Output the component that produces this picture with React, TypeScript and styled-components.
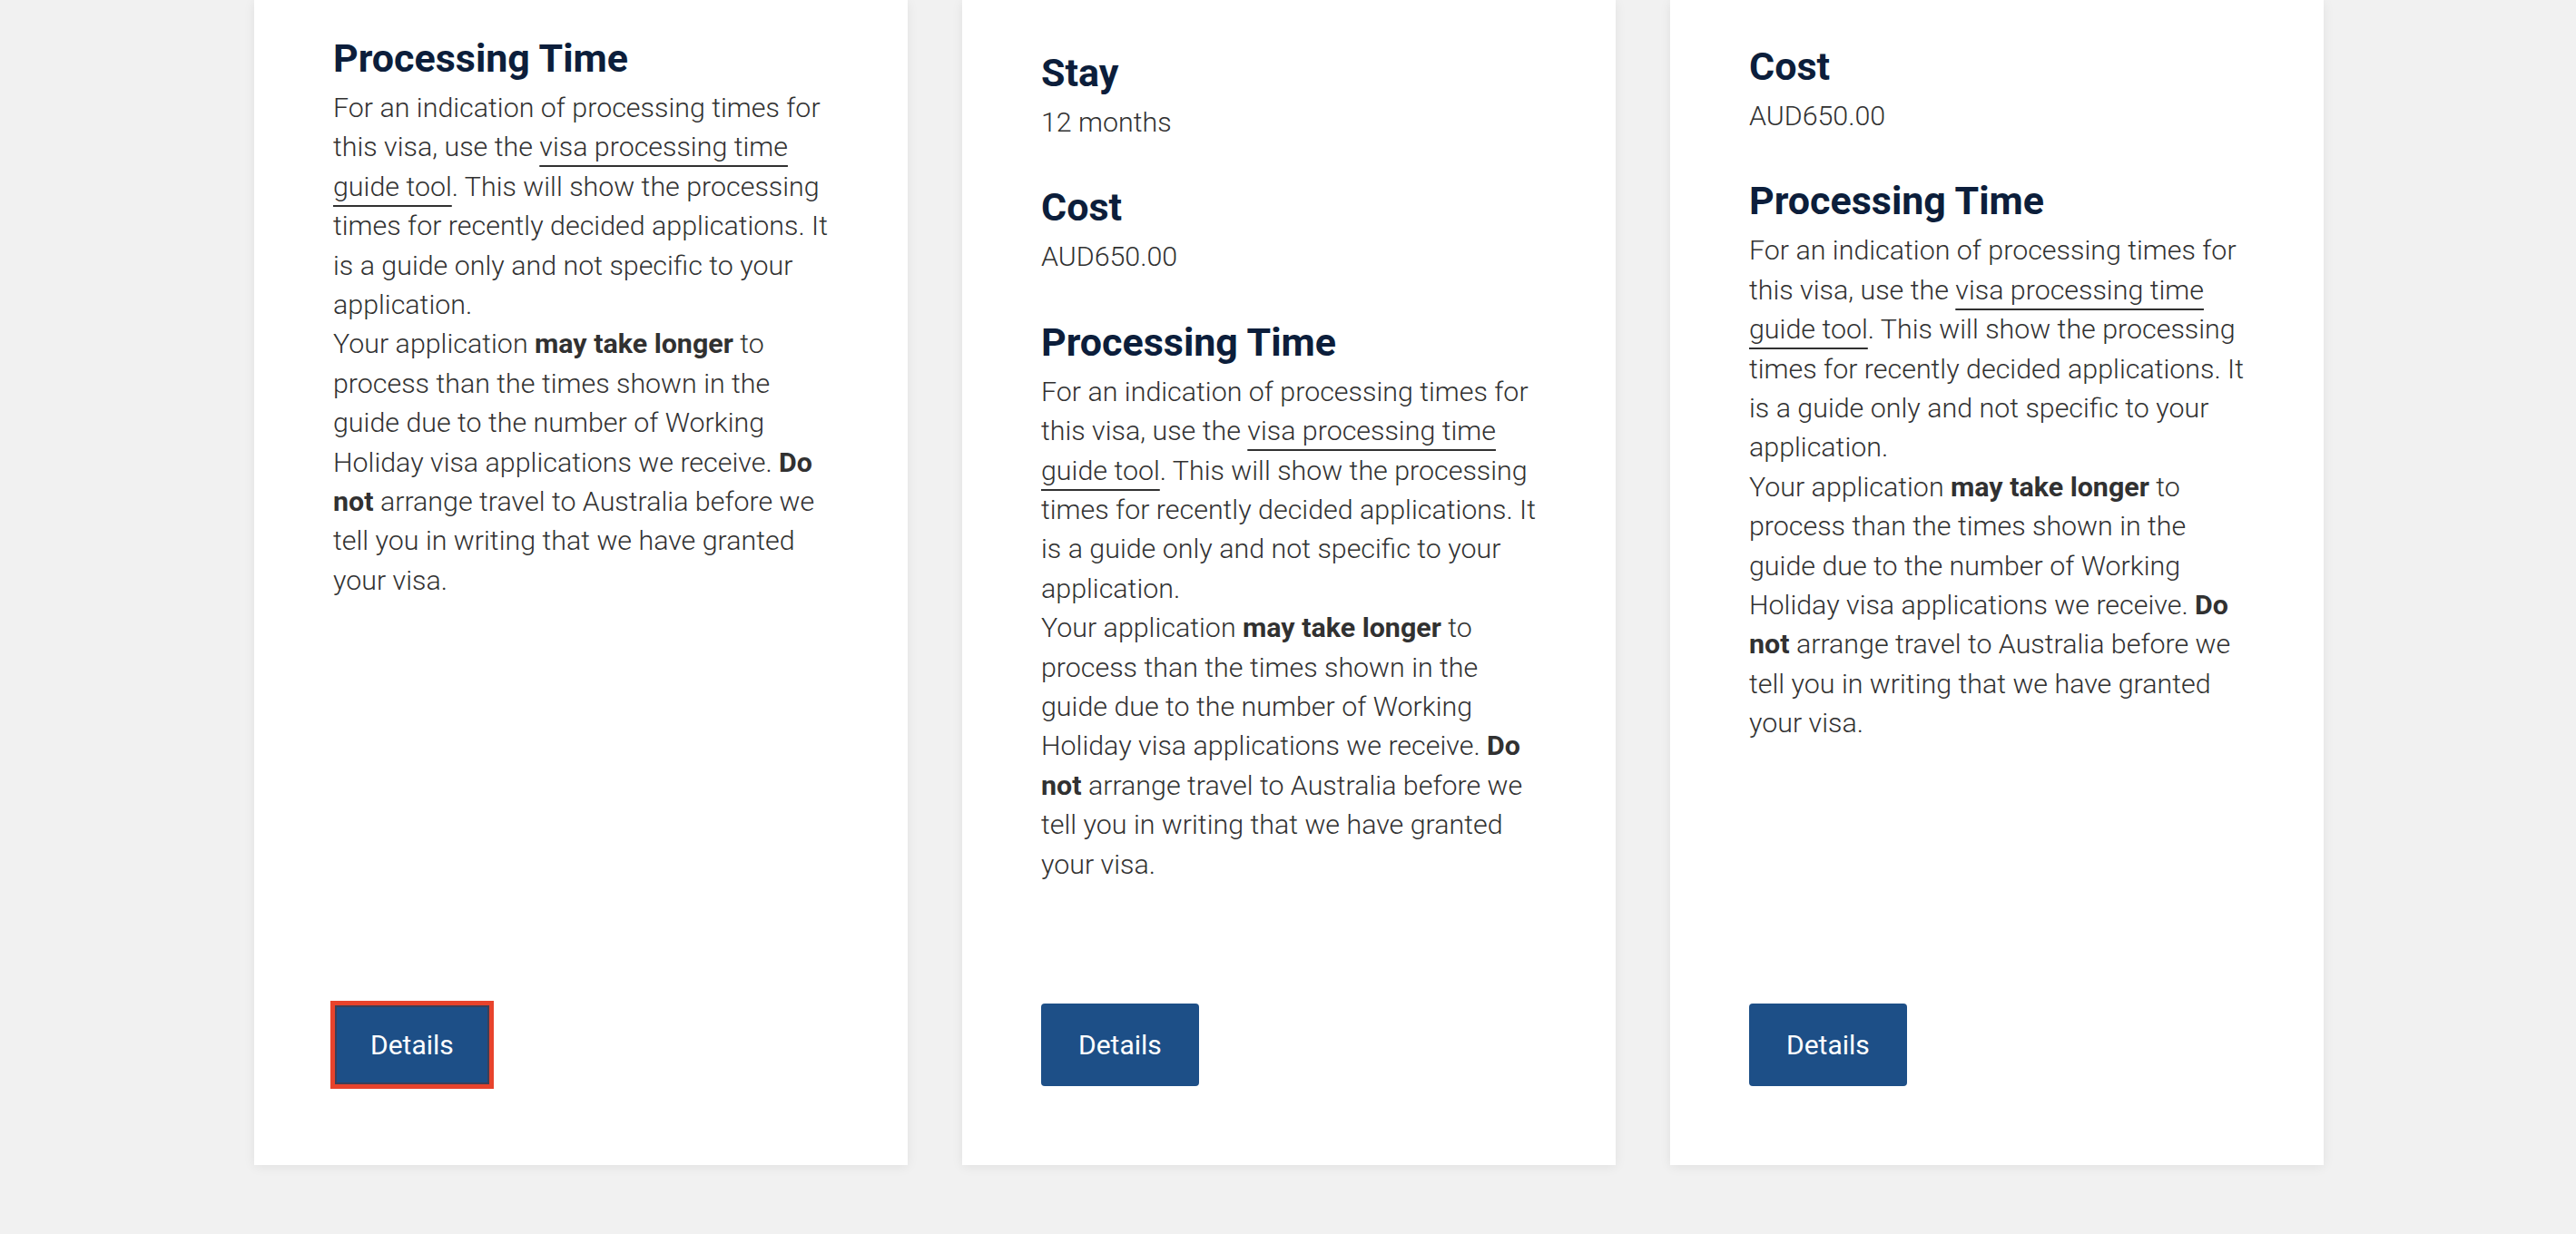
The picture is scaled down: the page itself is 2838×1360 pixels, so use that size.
import React from 'react'
import styled, { createGlobalStyle } from 'styled-components'

const GlobalStyle = createGlobalStyle`
  html, body {
    margin: 0;
    padding: 0;
    background: #f1f1f1;
  }
  body {
    font-family: Roboto, 'Liberation Sans', Arial, sans-serif;
    -webkit-font-smoothing: antialiased;
  }
  * {
    box-sizing: border-box;
  }
`

const Page = styled.div`
  min-height: 100vh;
  display: flex;
  flex-direction: column;
  padding-bottom: 76px;
`

const Row = styled.div`
  flex: 1;
  display: flex;
  justify-content: center;
  align-items: stretch;
  gap: 60px;
  padding-left: 2px;
`

const Card = styled.div.withConfig({ shouldForwardProp: p => p !== 'lead' })<{ lead: number }>`
  width: 720px;
  display: flex;
  flex-direction: column;
  align-items: flex-start;
  background: #fff;
  padding: ${props => `${props.lead}px 84px 87px 87px`};
  box-shadow: 0 2px 12px rgba(0, 0, 0, 0.07);
`

const Section = styled.div`
  width: 100%;
  margin-bottom: 46px;
`

const Heading = styled.h3`
  margin: 0 0 7px;
  font-size: 43px;
  line-height: 52px;
  font-weight: 700;
  color: #0c1e3b;
`

const Text = styled.p`
  margin: 0;
  font-size: 30.4px;
  line-height: 43.4px;
  font-weight: 300;
  color: #313131;

  strong {
    font-weight: 700;
  }
`

const Link = styled.a`
  color: inherit;
  text-decoration: underline;
  text-decoration-thickness: 2px;
  text-underline-offset: 10px;
  text-decoration-skip-ink: none;
`

const Button = styled.button.withConfig({ shouldForwardProp: p => p !== 'focused' })<{
  focused: boolean
}>`
  margin-top: auto;
  height: 91px;
  padding: 0 41px;
  border: none;
  border-radius: ${props => (props.focused ? '0' : '4px')};
  background: #1d4f87;
  color: #fff;
  font-family: Roboto, 'Liberation Sans', Arial, sans-serif;
  font-size: 30px;
  font-weight: 400;
  cursor: pointer;
  outline: ${props => (props.focused ? '5px solid #e8432c' : 'none')};
  outline-offset: -2px;
  box-shadow: ${props => (props.focused ? 'inset 0 0 0 4px #3b3f58' : 'none')};
`

interface ISection {
  title: string
  body: React.ReactNode
}

const stay: ISection = { title: 'Stay', body: <Text>12 months</Text> }
const cost: ISection = { title: 'Cost', body: <Text>AUD650.00</Text> }
const processing: ISection = {
  title: 'Processing Time',
  body: (
    <>
      <Text>
        For an indication of processing times for this visa, use the{' '}
        <Link href="#">visa processing time guide tool</Link>. This will show the processing
        times for recently decided applications. It is a guide only and not specific to your
        application.
      </Text>
      <Text>
        Your application <strong>may take longer</strong> to process than the times shown in the
        guide due to the number of Working Holiday visa applications we receive.{' '}
        <strong>Do not</strong> arrange travel to Australia before we tell you in writing that we
        have granted your visa.
      </Text>
    </>
  ),
}

const cards = [
  { lead: 38, sections: [processing], focused: true },
  { lead: 54, sections: [stay, cost, processing], focused: false },
  { lead: 47, sections: [cost, processing], focused: false },
]

const App = () => {
  return (
    <>
      <GlobalStyle />
      <Page>
        <Row>
          {cards.map((card, i) => (
            <Card key={i} lead={card.lead}>
              {card.sections.map(section => (
                <Section key={section.title}>
                  <Heading>{section.title}</Heading>
                  {section.body}
                </Section>
              ))}
              <Button focused={card.focused}>Details</Button>
            </Card>
          ))}
        </Row>
      </Page>
    </>
  )
}

export default App
